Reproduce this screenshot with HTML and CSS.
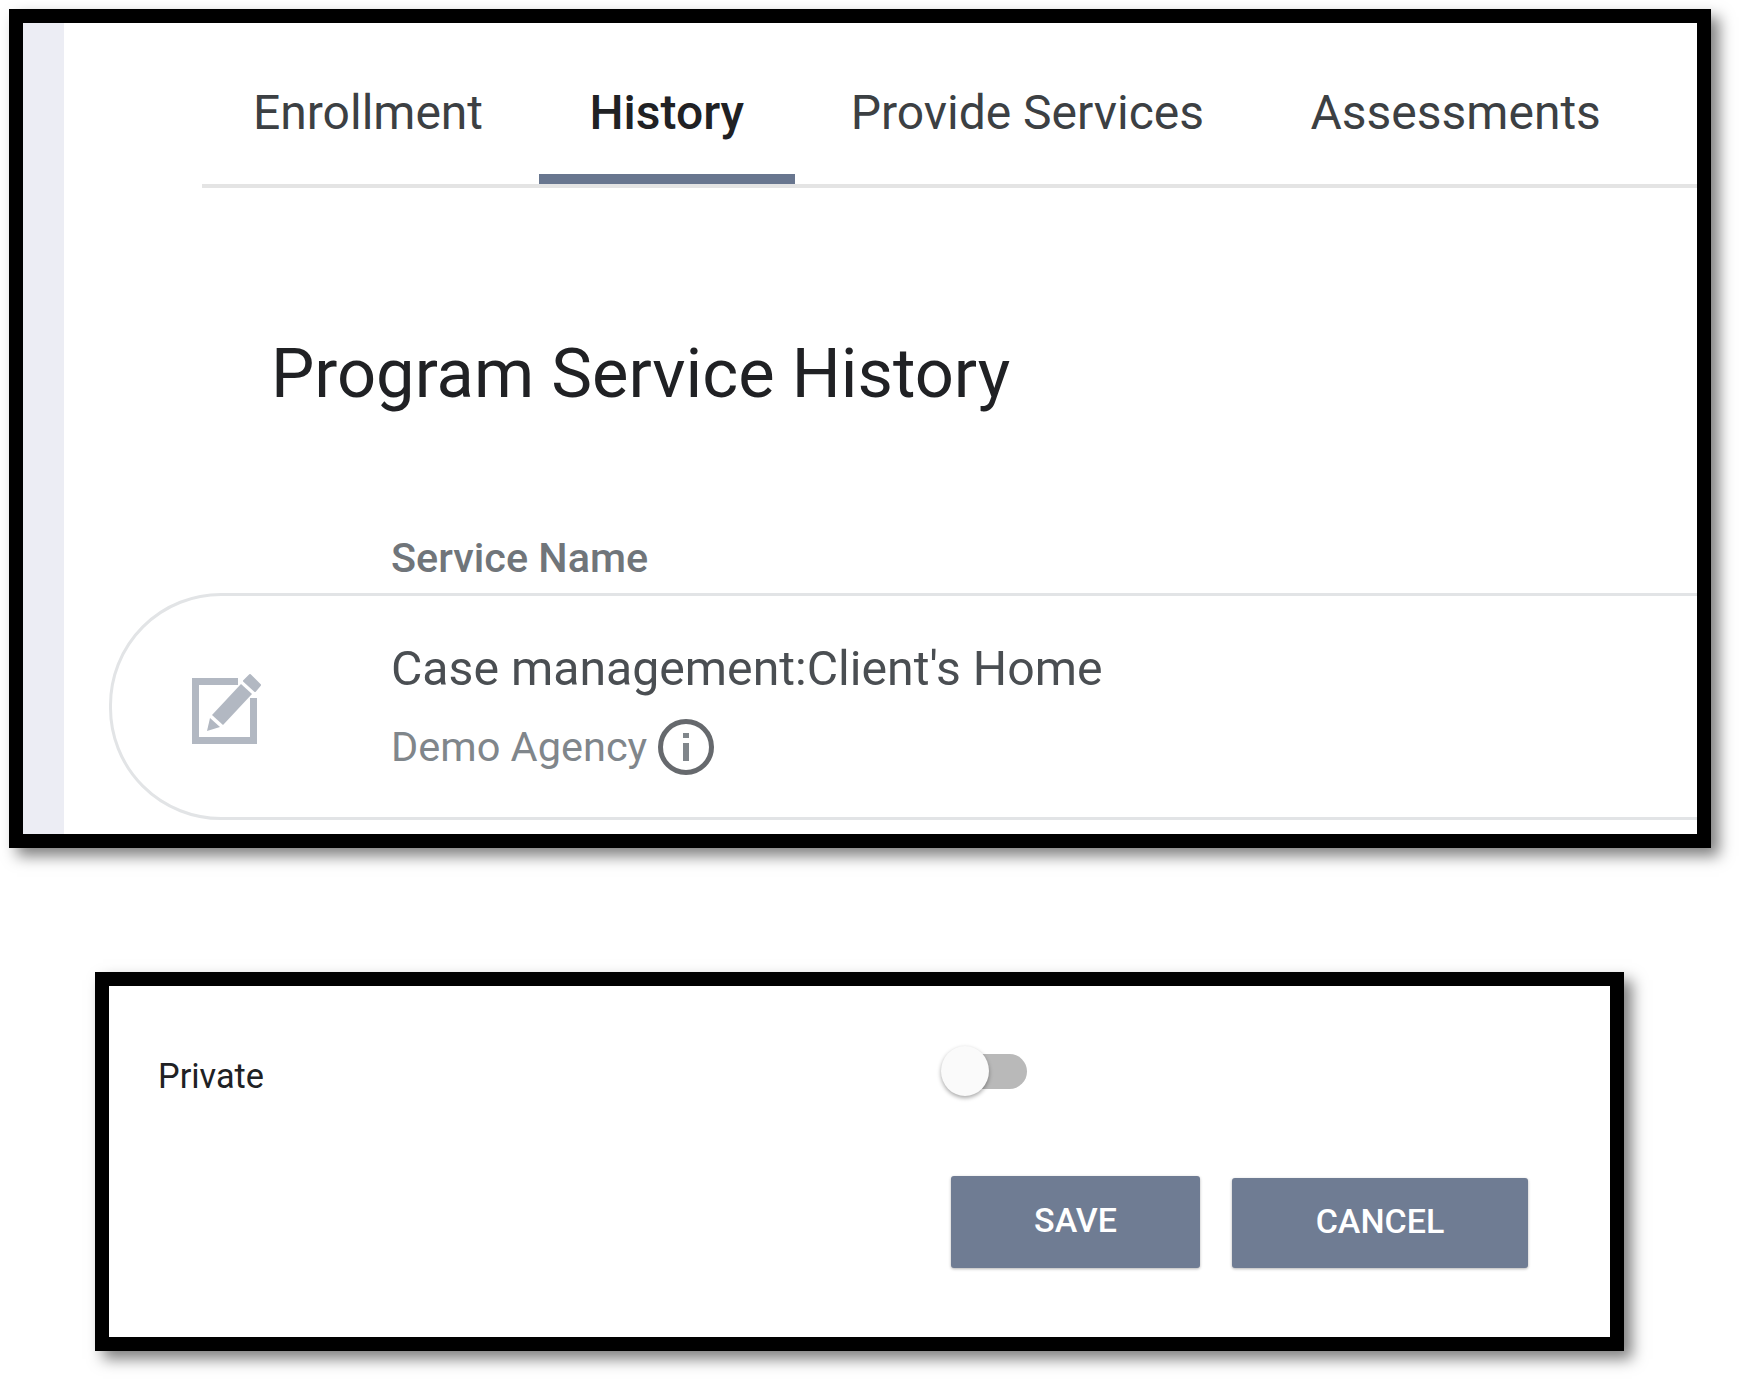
FILE: index.html
```html
<!DOCTYPE html>
<html lang="en">
<head>
    <meta charset="UTF-8">
    <meta name="viewport" content="width=device-width, initial-scale=1.0">
    <title>Program Service History</title>
    <link rel="stylesheet" href="styles.css">
</head>
<body>
 <div class="frame frame-top">
    <div class="side-strip"></div>
    <main class="content">
        <nav class="tabs">
            <a class="tab">Enrollment</a>
            <a class="tab active">History</a>
            <a class="tab">Provide Services</a>
            <a class="tab">Assessments</a>
        </nav>
        <h1>Program Service History</h1>
        <div class="col-label">Service Name</div>
        <div class="service-row">
            <svg class="edit-icon" viewBox="0 0 72 74">
                <path d="M48 9.5H5.5V68.5H63.5V26" fill="none" stroke="#b2b8c2" stroke-width="7"/>
                <path d="M22 43l11 10 29-31-11-10z" fill="#b2b8c2" stroke="#fff" stroke-width="1.5" paint-order="stroke"/>
                <path d="M20 46l10 9-13 4z" fill="#b2b8c2"/>
                <path d="M54 9l11 10 5-6-10-10z" fill="#b2b8c2" stroke="#b2b8c2" stroke-width="2" stroke-linejoin="round"/>
            </svg>
            <div class="service-text">
                <div class="service-name">Case management:Client's Home</div>
                <div class="agency">
                    <span class="agency-name">Demo Agency</span>
                    <svg class="info-icon" viewBox="0 0 56 56">
                        <circle cx="28" cy="28" r="25.5" fill="none" stroke="#66696d" stroke-width="5"/>
                        <rect x="25" y="24" width="6" height="18" fill="#80868b"/>
                        <rect x="25" y="14" width="6" height="5" fill="#80868b"/>
                    </svg>
                </div>
            </div>
        </div>
    </main>
 </div>

 <div class="frame frame-bottom">
    <div class="private-row">
        <label class="private-label">Private</label>
        <div class="toggle"><span class="thumb"></span></div>
    </div>
    <div class="actions">
        <button class="btn btn-save">SAVE</button>
        <button class="btn btn-cancel">CANCEL</button>
    </div>
 </div>
</body>
</html>
```

FILE: styles.css
```css
* {
    margin: 0;
    padding: 0;
    box-sizing: border-box;
    font-family: Roboto, "Liberation Sans", sans-serif;
}
html, body {
    height: 100%;
    overflow: hidden;
    background-color: #fff;
}
body {
    padding: 9px 0 0 9px;
}
.frame {
    border: 14px solid #000;
    background-color: #fff;
    box-shadow: 8px 8px 14px rgba(0, 0, 0, 0.5);
}
.frame-top {
    display: flex;
    width: 1702px;
    height: 839px;
    overflow: hidden;
}
.side-strip {
    width: 41px;
    flex-shrink: 0;
    background-color: #ecedf4;
}
.content {
    flex: 1;
    min-width: 0;
}
.tabs {
    display: flex;
    gap: 4.5px;
    height: 165px;
    margin-left: 138px;
    border-bottom: 4px solid #e4e4e4;
}
.tab {
    display: flex;
    align-items: center;
    height: 161px;
    padding: 28px 51px 0;
    font-size: 48px;
    color: #3c4043;
    border-bottom: 10px solid transparent;
}
.tab.active {
    font-weight: 500;
    color: #202124;
    border-bottom-color: #68768f;
}
h1 {
    margin: 148px 0 0 207px;
    font-size: 68.7px;
    font-weight: 400;
    line-height: 76px;
    color: #202124;
}
.col-label {
    margin: 123px 0 0 327px;
    font-size: 41.4px;
    font-weight: 500;
    line-height: 46px;
    color: #70757a;
}
.service-row {
    display: flex;
    align-items: center;
    width: 1700px;
    height: 227px;
    margin: 12px 0 0 45px;
    padding-left: 78px;
    border: 3px solid #e2e4e6;
    border-radius: 112px;
}
.edit-icon {
    width: 72px;
    height: 74px;
    margin-top: 5px;
    flex-shrink: 0;
}
.service-text {
    margin: 4px 0 0 129px;
}
.service-name {
    font-size: 48.2px;
    line-height: 54px;
    color: #4a4e52;
}
.agency {
    display: flex;
    align-items: center;
    gap: 11px;
    margin-top: 23px;
    font-size: 41.5px;
    color: #80868b;
}
.agency-name {
    padding-bottom: 2px;
}
.info-icon {
    width: 56px;
    height: 56px;
}
.frame-bottom {
    width: 1529px;
    height: 379px;
    margin: 124px 0 0 86px;
    padding: 60px 82px 0 49px;
}
.private-row {
    display: flex;
    align-items: center;
    height: 51px;
}
.private-label {
    width: 790px;
    padding-top: 8px;
    font-size: 34.3px;
    color: #202124;
}
.toggle {
    position: relative;
    width: 79px;
    height: 35px;
    border-radius: 18px;
    background-color: #b9b9b9;
}
.thumb {
    position: absolute;
    top: -8px;
    left: -7px;
    width: 48px;
    height: 50px;
    border-radius: 50%;
    background-color: #fafafa;
    box-shadow: 0 2px 4px rgba(0, 0, 0, 0.35);
}
.actions {
    display: flex;
    justify-content: flex-end;
    align-items: flex-end;
    gap: 32px;
    margin-top: 79px;
}
.btn {
    border: 0;
    border-radius: 3px;
    padding-bottom: 4px;
    font-size: 34px;
    font-weight: 500;
    color: #fff;
    background-color: #6f7c93;
    box-shadow: 0 1px 3px rgba(0, 0, 0, 0.3);
}
.btn-save {
    width: 249px;
    height: 92px;
}
.btn-cancel {
    width: 296px;
    height: 90px;
}
```
